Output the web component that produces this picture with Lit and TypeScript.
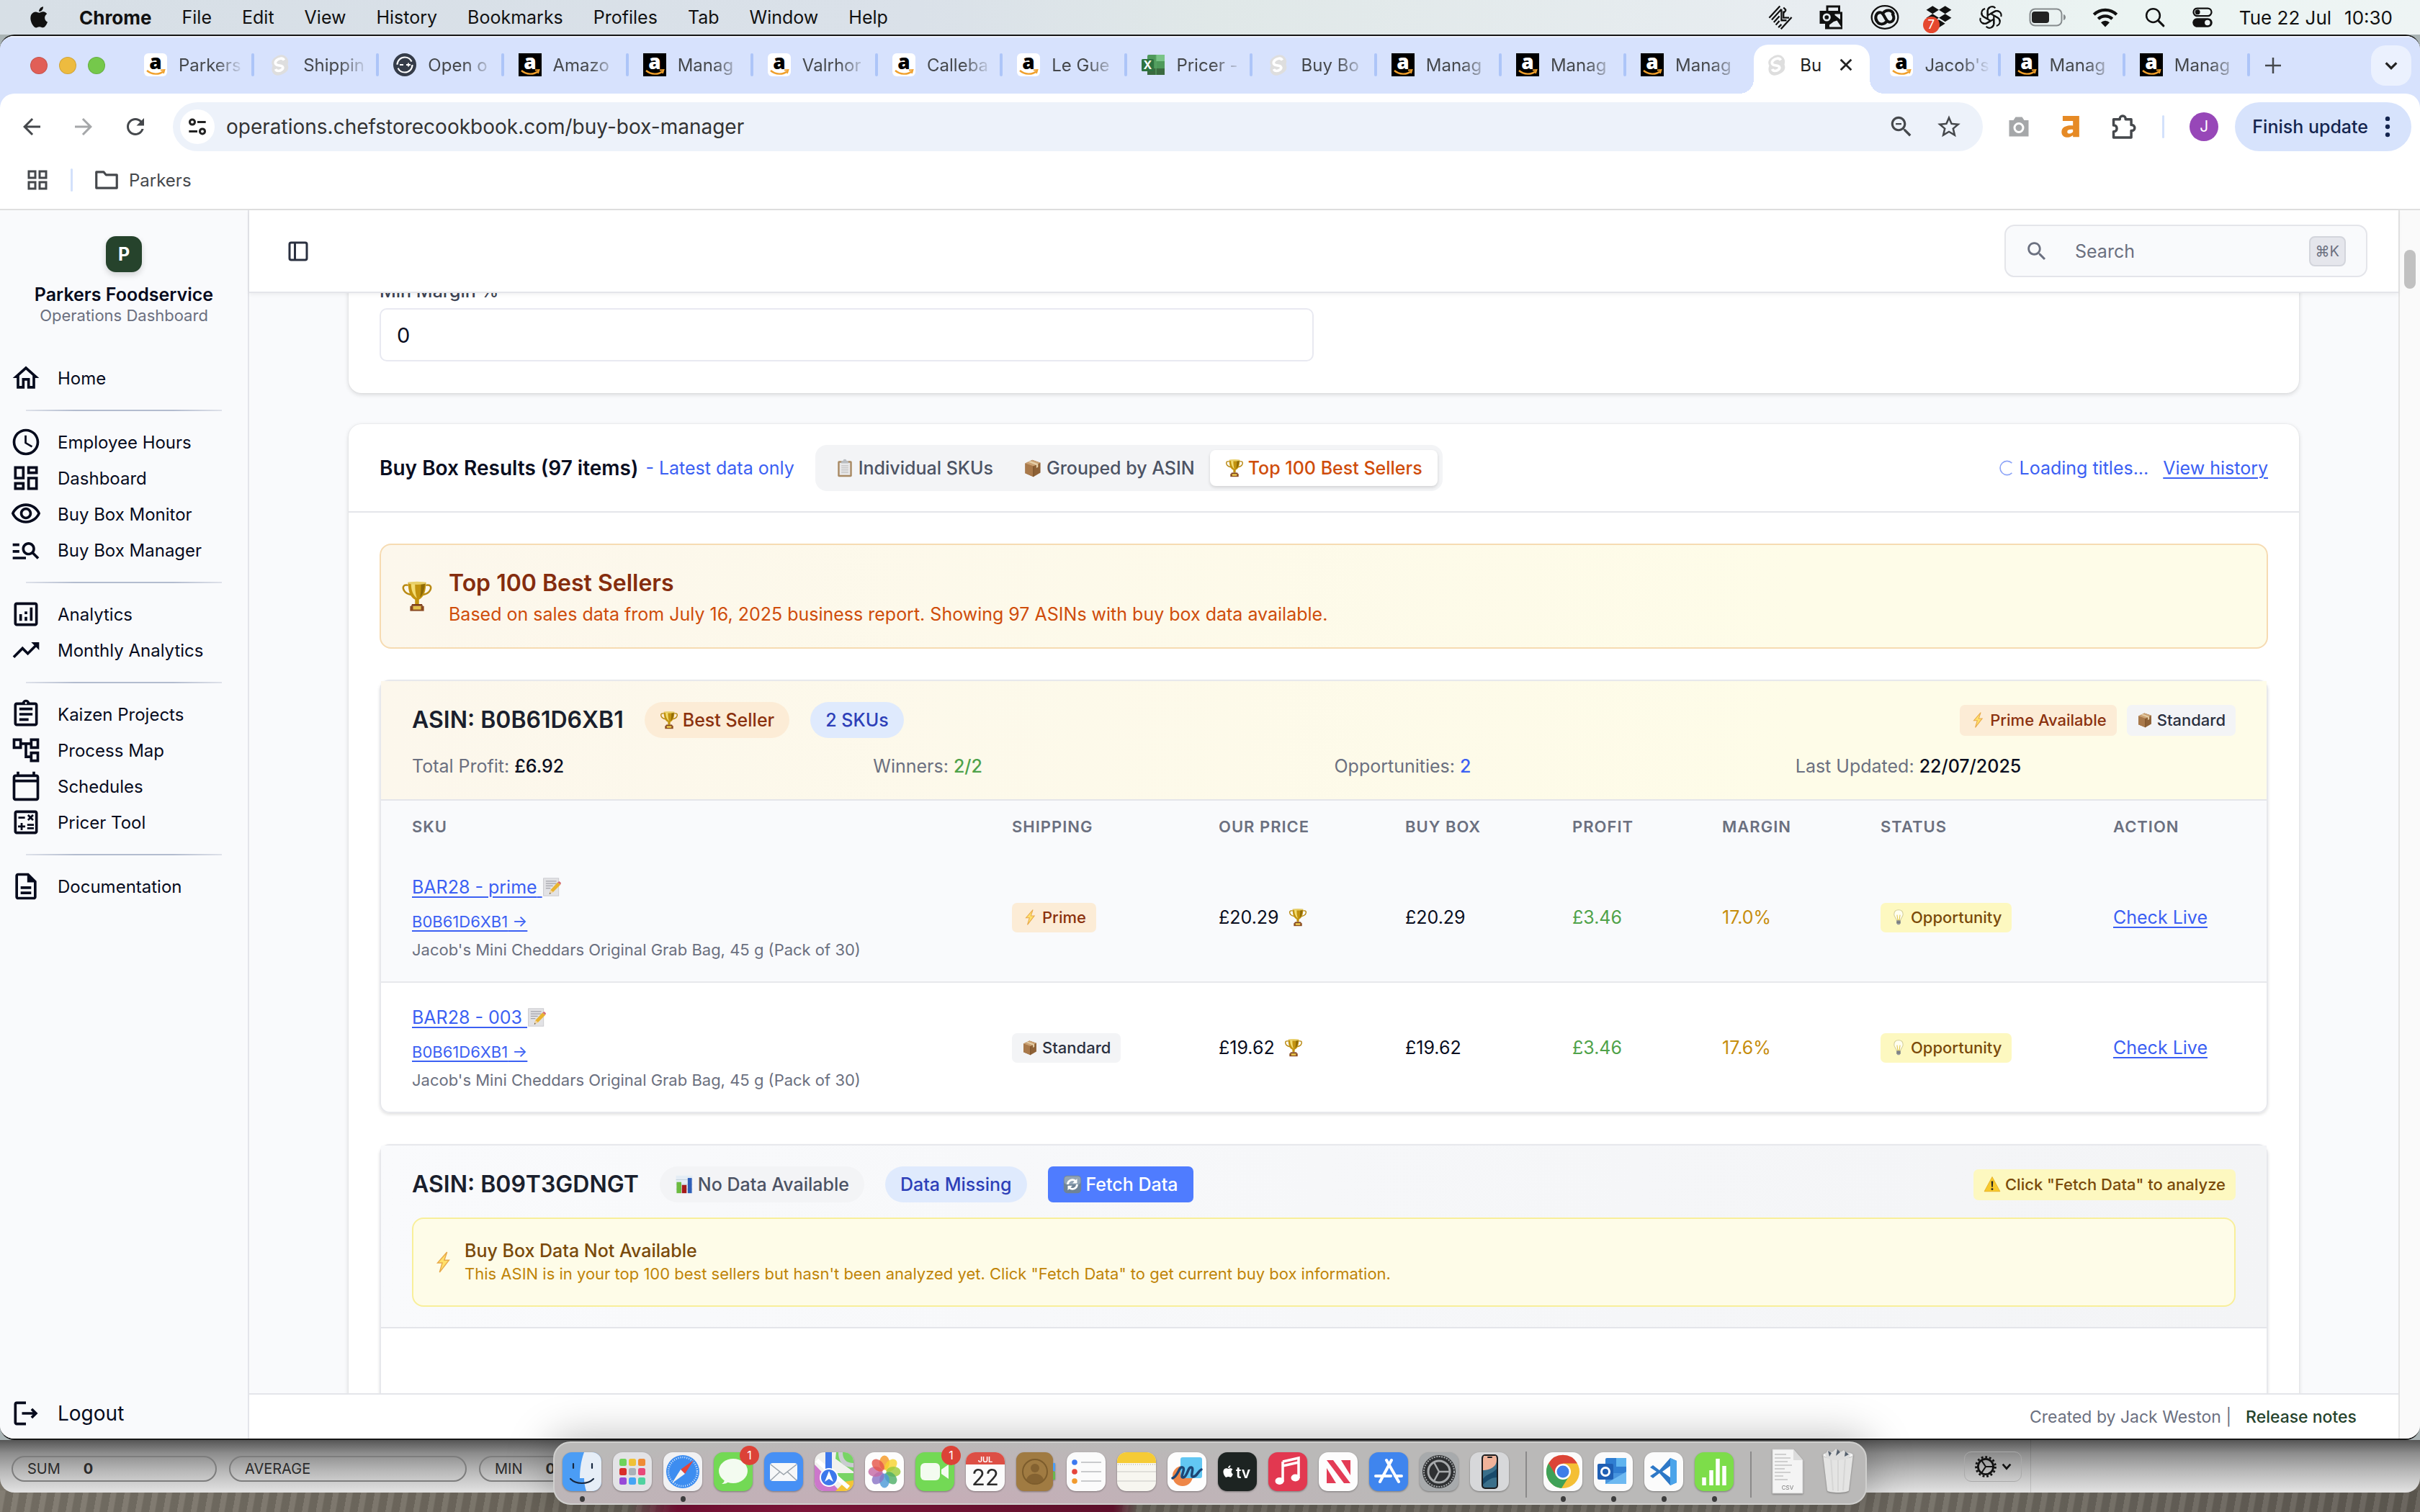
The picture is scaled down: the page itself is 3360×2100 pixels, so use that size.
import { LitElement, html, svg, css, nothing, type TemplateResult, type SVGTemplateResult } from "lit";
import { customElement, property } from "lit/decorators.js";
import { classMap } from "lit/directives/class-map.js";

/* ---------- shared glyph helpers ---------- */

const glyph = (size: number, body: SVGTemplateResult, box = 24): TemplateResult =>
  html`<svg width=${size} height=${size} viewBox="0 0 ${box} ${box}" fill="currentColor" aria-hidden="true">${body}</svg>`;

const path = (d: string) => svg`<path d=${d} />`;

const NAV_ICONS: Record<string, string> = {
  home: "M12 5.69l5 4.5V18h-2v-6H9v6H7v-7.81l5-4.5M12 3L2 12h3v8h6v-6h2v6h6v-8h3L12 3z",
  clock: "M11.99 2C6.47 2 2 6.48 2 12s4.47 10 9.99 10C17.52 22 22 17.52 22 12S17.52 2 11.99 2zM12 20c-4.42 0-8-3.58-8-8s3.58-8 8-8 8 3.58 8 8-3.58 8-8 8zm.5-13H11v6l5.25 3.15.75-1.23-4.5-2.67z",
  dashboard: "M19 5v2h-4V5h4M9 5v6H5V5h4m10 8v6h-4v-6h4M9 17v2H5v-2h4M21 3h-8v6h8V3zM11 3H3v10h8V3zm10 8h-8v10h8V11zm-10 4H3v6h8v-6z",
  eye: "M12 6c3.79 0 7.17 2.13 8.82 5.5C19.17 14.87 15.79 17 12 17s-7.17-2.13-8.82-5.5C4.83 8.13 8.21 6 12 6m0-2C7 4 2.73 7.11 1 11.5 2.73 15.89 7 19 12 19s9.27-3.11 11-7.5C21.27 7.11 17 4 12 4zm0 5c1.38 0 2.5 1.12 2.5 2.5S13.38 14 12 14s-2.5-1.12-2.5-2.5S10.62 9 12 9m0-2c-2.48 0-4.5 2.02-4.5 4.5S9.52 16 12 16s4.5-2.02 4.5-4.5S14.48 7 12 7z",
  manage: "M7 9H2V7h5v2zm0 3H2v2h5v-2zm13.59 7l-3.83-3.83c-.8.52-1.74.83-2.76.83-2.76 0-5-2.24-5-5s2.24-5 5-5 5 2.24 5 5c0 1.02-.31 1.96-.83 2.75L22 17.59 20.59 19zM17 11c0-1.65-1.35-3-3-3s-3 1.35-3 3 1.35 3 3 3 3-1.35 3-3zM2 19h10v-2H2v2z",
  analytics: "M19 3H5c-1.1 0-2 .9-2 2v14c0 1.1.9 2 2 2h14c1.1 0 2-.9 2-2V5c0-1.1-.9-2-2-2zm0 16H5V5h14v14zM7 12h2v5H7zm8-5h2v10h-2zm-4 7h2v3h-2zm0-4h2v2h-2z",
  trend: "M16 6l2.29 2.29-4.88 4.88-4-4L2 16.59 3.41 18l6-6 4 4 6.3-6.29L22 12V6h-6z",
  clipboard: "M7 15h7v2H7zm0-4h10v2H7zm0-4h10v2H7zm12-4h-4.18C14.4 1.84 13.3 1 12 1s-2.4.84-2.82 2H5c-1.1 0-2 .9-2 2v14c0 1.1.9 2 2 2h14c1.1 0 2-.9 2-2V5c0-1.1-.9-2-2-2zm-7-.25c.41 0 .75.34.75.75s-.34.75-.75.75-.75-.34-.75-.75.34-.75.75-.75zM19 19H5V5h14v14z",
  tree: "M22 11V3h-7v3H9V3H2v8h7V8h2v10h4v3h7v-8h-7v3h-2V8h2v3h7zM7 9H4V5h3v4zm10 6h3v4h-3v-4zm0-10h3v4h-3V5z",
  calendar: "M20 3h-1V1h-2v2H7V1H5v2H4c-1.1 0-2 .9-2 2v16c0 1.1.9 2 2 2h16c1.1 0 2-.9 2-2V5c0-1.1-.9-2-2-2zm0 18H4V9h16v12zm0-14H4V5h16v2z",
  calc: "M19 3H5c-1.1 0-2 .9-2 2v14c0 1.1.9 2 2 2h14c1.1 0 2-.9 2-2V5c0-1.1-.9-2-2-2zm0 16H5V5h14v14zM6.25 7.72h5v1.5h-5zM13 15.75h5v1.5h-5zm0-2.5h5v1.5h-5zM8 18h1.5v-2h2v-1.5h-2v-2H8v2H6V16h2zm6.09-7.05l1.41-1.41 1.41 1.41 1.06-1.06-1.41-1.42 1.41-1.41L16.91 6 15.5 7.41 14.09 6l-1.06 1.06 1.41 1.41-1.41 1.42z",
  doc: "M8 16h8v2H8zm0-4h8v2H8zm6-10H6c-1.1 0-2 .9-2 2v16c0 1.1.89 2 1.99 2H18c1.1 0 2-.9 2-2V8l-6-6zm4 18H6V4h7v5h5v11z",
  logout: "M17 8l-1.41 1.41L17.17 11H9v2h8.17l-1.58 1.58L17 16l4-4-4-4zM5 5h7V3H5c-1.1 0-2 .9-2 2v14c0 1.1.9 2 2 2h7v-2H5V5z",
};

const SEARCH =
  "M15.5 14h-.79l-.28-.27C15.41 12.59 16 11.11 16 9.5 16 5.91 13.09 3 9.5 3S3 5.91 3 9.5 5.91 16 9.5 16c1.61 0 3.09-.59 4.23-1.57l.27.28v.79l5 4.99L20.49 19l-4.99-5zm-6 0C7.01 14 5 11.99 5 9.5S7.01 5 9.5 5 14 7.01 14 9.5 11.99 14 9.5 14z";
const APPLE =
  "M17.05 12.54c-.03-2.6 2.13-3.86 2.22-3.92-1.21-1.77-3.09-2.01-3.76-2.04-1.6-.16-3.12.94-3.93.94-.81 0-2.06-.92-3.39-.89-1.74.03-3.35 1.01-4.25 2.57-1.81 3.14-.46 7.8 1.3 10.35.86 1.25 1.89 2.65 3.24 2.6 1.3-.05 1.79-.84 3.36-.84 1.57 0 2.01.84 3.39.81 1.4-.02 2.28-1.27 3.14-2.53.99-1.45 1.4-2.85 1.42-2.92-.03-.01-2.72-1.04-2.74-4.13zM14.47 4.9c.72-.87 1.2-2.08 1.07-3.28-1.03.04-2.28.69-3.02 1.55-.66.77-1.24 2-1.09 3.18 1.15.09 2.33-.59 3.04-1.45z";

/* ---------- picture symbols used inside labels ---------- */

type SymbolName = "trophy" | "box" | "clip" | "bolt" | "bulb" | "chart" | "sync" | "warn" | "memo";

const SYMBOLS: Record<SymbolName, SVGTemplateResult> = {
  trophy: svg`
    <path d="M7 5C2 4 1 7 3 10.500 4.500 13 7 14 10 14.500M25 5c5-1 6 2 4 5.500-1.500 2.500-4 3.500-7 4" fill="none" stroke="#b98a14" stroke-width="1.800"/>
    <path d="M7 2h18c0 9-2 15-7 17.500V24h-4v-4.500C9 17 7 11 7 2z" fill="#c2930f"/>
    <path d="M10 3h4c0 7 .5 11 2 15-4-3-6-8-6-15z" fill="#f3dc72"/><path d="M20 3h4c-.5 7-2 12-5 14 1-5 1-9 1-14z" fill="#8f6a06"/>
    <ellipse cx="16" cy="2.800" rx="9" ry="1.500" fill="#e8cf68"/>
    <path d="M11 24h10l1 2H10z" fill="#7a3b18"/><rect x="9" y="26" width="14" height="5" fill="#8a4a20"/><rect x="12" y="26" width="8" height="3.500" fill="#e3c04a"/>`,
  box: svg`
    <path d="M3 8l12-6 14 5v17l-12 7L3 25z" fill="#8e6136"/><path d="M3 8l14 5v18L3 25z" fill="#a9794a"/>
    <path d="M3 8l12-6 14 5-12 6z" fill="#cba274"/><path d="M8 5.500l14 5.500v5l3-1.500V9L12 4z" fill="#e5cfa8"/><path d="M17 13v18" stroke="#6d4722"/>`,
  clip: svg`
    <rect x="4" y="4" width="24" height="27" rx="2" fill="#a98a63"/><rect x="7" y="7" width="18" height="21" fill="#e9e9ea"/>
    <path d="M10 12h12M10 15h12M10 18h12M10 21h12M10 24h12" stroke="#bdbdbd" stroke-width="1.200"/>
    <path d="M10 4h3c0-4 6-4 6 0h3v4H10z" fill="#b9bdc2"/>`,
  bolt: svg`<path d="M22 1L8 17h7l-4 14 14-18h-7z" fill="#ffe06a" stroke="#e8a94a" stroke-width="1.500"/>`,
  bulb: svg`
    <path d="M16 1c-6 0-9 4-9 9 0 5 4 7 5 12h8c1-5 5-7 5-12 0-5-3-9-9-9z" fill="#fffef0" stroke="#d2cd98" stroke-width="1.500"/>
    <path d="M13 11l1.500 11h3L19 11" fill="none" stroke="#e0c64a" stroke-width="1.500"/><path d="M12 22h8v6l-2 3h-4l-2-3z" fill="#96999d"/><path d="M12 24.500h8M12 27h8" stroke="#5f6266"/>`,
  chart: svg`
    <rect x="2" y="1" width="28" height="30" fill="#e4edf5"/><path d="M2 8h28M2 16h28M2 24h28" stroke="#bccbd9"/>
    <rect x="3" y="12" width="8" height="19" fill="#6cbb3f"/><rect x="12" y="17" width="8" height="14" fill="#a51a1a"/><rect x="22" y="5" width="7" height="26" fill="#2f5fb8"/>`,
  sync: svg`
    <rect x="1" y="1" width="30" height="30" rx="6" fill="#6f8396"/><rect x="2" y="2" width="28" height="14" rx="5" fill="#92a4b5"/>
    <path d="M8 16a8 8 0 0 1 13-6M24 16a8 8 0 0 1-13 6" fill="none" stroke="#fff" stroke-width="3.500"/><path d="M24 6v8h-8zM8 26v-8h8z" fill="#fff"/>`,
  warn: svg`<path d="M16 2l14.500 27h-29z" fill="#f7c92c" stroke="#e3a716" stroke-linejoin="round"/><path d="M14.300 10h3.400l-.7 11h-2z" fill="#222"/><circle cx="16" cy="24.800" r="1.900" fill="#222"/>`,
  memo: svg`
    <rect x="2" y="1" width="26" height="30" fill="#e2e2e5" stroke="#c5c5c9"/><path d="M6 6h18M6 10h18M6 14h12M6 18h8" stroke="#a2a2aa" stroke-width="1.400"/>
    <path d="M12 28l2-7L26 8l5 4-12 12z" fill="#e9b32f"/><path d="M26 8l3-2 3 3-1 3z" fill="#d66a70"/><path d="M12 28l2-7 5 4z" fill="#efd4a8"/><path d="M12 28l1-2.500 1.500 1.500z" fill="#333"/>`,
};

const symbol = (name: SymbolName, size = 24) =>
  html`<svg class="sym" width=${size} height=${size} viewBox="0 0 32 32" aria-hidden="true">${SYMBOLS[name]}</svg>`;

const base = css`
  *, *::before, *::after { box-sizing: border-box; }
  a { color: inherit; }
  button, input { font: inherit; color: inherit; margin: 0; }
  button { background: none; border: 0; padding: 0; }
  svg { display: block; flex: none; }
  p, h1, h2, h3 { margin: 0; font: inherit; }
`;

/* ---------- macOS menu bar ---------- */

@customElement("system-bar")
export class SystemBar extends LitElement {
  static styles = [base, css`
    :host { display: flex; align-items: center; height: 48px; padding: 0 38px; font-size: 25px; color: #111;
      background: linear-gradient(90deg, #d7dfe6, #dae1e9 38%, #e0e8e8 50%, #e8edf1 75%, #ebf4f2 88%, #eef4f4); }
    .menus, .status { display: flex; align-items: center; }
    .menus { gap: 42px; }
    .apple { margin-right: -4px; }
    .app { font-weight: 700; font-size: 26px; }
    .status { margin-left: auto; gap: 36px; }
    .time { display: flex; gap: 18px; font-size: 26px; }
    .notify { position: relative; }
    .count { position: absolute; left: -3px; bottom: -3px; width: 23px; height: 23px; border-radius: 50%; background: #e5482f; color: #fff; font-size: 17px; line-height: 23px; text-align: center; }
  `];

  render() {
    const menus = ["File", "Edit", "View", "History", "Bookmarks", "Profiles", "Tab", "Window", "Help"];
    return html`
      <div class="menus">
        <span class="apple">${glyph(34, path(APPLE))}</span>
        <span class="app">Chrome</span>
        ${menus.map((m) => html`<span>${m}</span>`)}
      </div>
      <div class="status">
        ${glyph(34, svg`<path d="M1 12.500L11.500 1M3.500 14.500L13 4M5.500 17l5.500-6M7.500 19.500l3.500-4M10 22l3-3M12.500 23.500L23 12M15 2.500l2.500 2.500M13 4v11h5M15 6v6.500h5.500M17.500 5L15 8" fill="none" stroke="currentColor" stroke-width="1.600"/>`)}
        ${glyph(36, svg`<path d="M7 1h13v6h2v16H6v-5H1V6h6z"/><path d="M9 3h9v3H9zM15 10l5 4V9h-5zM14 16l3-1 4 6h-11v-2z" fill="#e8edf1"/><circle cx="7.500" cy="12" r="2.800" fill="none" stroke="#e8edf1" stroke-width="1.800"/>`)}
        ${glyph(40, svg`<ellipse cx="12" cy="12" rx="11" ry="9.500" fill="none" stroke="currentColor" stroke-width="1.400"/><path d="M5.500 15.500C3 12 5 8 8 8c4 0 4 8 8 8 3 0 4.500-3.500 2.500-6.500M10.500 8.500C13 5 18 6 19 9M13.500 15.500c-2.500 3-7 3-8.500-1" fill="none" stroke="currentColor" stroke-width="2.400" stroke-linecap="round"/>`)}
        <span class="notify">
          ${glyph(38, svg`<path d="M6.500 2l5.500 3.500L6.500 9 1 5.500zM17.500 2L23 5.500 17.500 9 12 5.500zM6.500 9l5.500 3.500L6.500 16 1 12.500zM17.500 9l5.500 3.500-5.500 3.500-5.500-3.500zM12 14l5.500 3.500L12 21l-5.500-3.500z"/>`)}
          <span class="count">7</span>
        </span>
        ${glyph(34, svg`<g fill="none" stroke="currentColor" stroke-width="1.500" stroke-linejoin="round">${[0, 60, 120, 180, 240, 300].map(
          (a) => svg`<path transform="rotate(${a} 12 12)" d="M9 10.200V5.500A4.300 4.300 0 0 1 16.500 3M9 10.200l6.800-4a4.300 4.300 0 0 1 4.200.2M9 10.200l3-1.700"/>`)}</g>`)}
        <svg width="52" height="26" viewBox="0 0 52 26" aria-hidden="true"><rect x="1.500" y="1.500" width="44" height="23" rx="7" fill="none" stroke="#868b8d" stroke-width="2"/><rect x="4" y="5" width="24" height="16" rx="4" fill="#222"/><path d="M48 9c4 1 4 7 0 8z" fill="#868b8d"/></svg>
        ${glyph(36, svg`<g fill="none" stroke="currentColor" stroke-width="2.800"><path d="M1.500 9.500a15 15 0 0 1 21 0M5.500 13.500a9.300 9.300 0 0 1 13 0"/></g><path d="M12 21l-4-4.200a5.600 5.600 0 0 1 8 0z"/>`)}
        ${glyph(30, svg`<circle cx="10" cy="10" r="7.500" fill="none" stroke="currentColor" stroke-width="2"/><path d="M15.500 15.500l6 6" stroke="currentColor" stroke-width="2.400" stroke-linecap="round"/>`)}
        ${glyph(30, svg`<rect x="2" y="2" width="20" height="8.500" rx="4.200" fill="none" stroke="currentColor" stroke-width="1.800"/><circle cx="6.500" cy="6.200" r="2.800"/><rect x="1" y="13" width="22" height="10" rx="5"/><circle cx="17.500" cy="18" r="3" fill="#eef4f4"/>`)}
        <span class="time"><span>Tue 22 Jul</span><span>10:30</span></span>
      </div>`;
  }
}

/* ---------- browser chrome ---------- */

type Favicon = "amazon" | "seller" | "svelte" | "chat" | "excel";
interface TabInfo { icon: Favicon; label: string; active?: boolean; }

const TABS: TabInfo[] = [
  { icon: "amazon", label: "Parkers" }, { icon: "svelte", label: "Shippin" }, { icon: "chat", label: "Open o" },
  { icon: "seller", label: "Amazo" }, { icon: "seller", label: "Manag" }, { icon: "amazon", label: "Valrhor" },
  { icon: "amazon", label: "Calleba" }, { icon: "amazon", label: "Le Gue" }, { icon: "excel", label: "Pricer -" },
  { icon: "svelte", label: "Buy Bo" }, { icon: "seller", label: "Manag" }, { icon: "seller", label: "Manag" },
  { icon: "seller", label: "Manag" }, { icon: "svelte", label: "Bu", active: true }, { icon: "amazon", label: "Jacob's" },
  { icon: "seller", label: "Manag" }, { icon: "seller", label: "Manag" },
];

const amazonMark = (bg: string, fg: string, radius: number) => svg`
  <rect width="32" height="32" rx=${radius} fill=${bg}/>
  <text x="16" y="22" text-anchor="middle" font-family="Open Sans, sans-serif" font-weight="800" font-size="28" fill=${fg}>a</text>
  <path d="M4 24c7 6 17 6 23 1" fill="none" stroke="#f0a02c" stroke-width="2.400"/><path d="M23 23.500l5.500-.5-1.500 5" fill="none" stroke="#f0a02c" stroke-width="1.800"/>`;

const FAVICONS: Record<Favicon, SVGTemplateResult> = {
  amazon: amazonMark("#fff", "#000", 6),
  seller: amazonMark("#000", "#fff", 0),
  svelte: svg`<path d="M25.500 6.500C22 1 15 1 10 5 4 8.500 3 13 5.500 17 3 23 5 29 10.500 30.500 16 32 24 27 26 24c2-3 1.500-6 .5-8.500 1-3 1-6-1-9z" fill="#dedede"/><path d="M21.500 9.500C19 5.500 14 7.500 12 9c-3.500 2.500-4 6 .5 7.500l5 1c3 1 3 3.500 1 5-3 2.500-7.500 3-9-.5" fill="none" stroke="#fff" stroke-width="3.600"/>`,
  chat: svg`<circle cx="16" cy="16" r="16" fill="#353c49"/><circle cx="16" cy="16" r="10.500" fill="none" stroke="#fff" stroke-width="2.200" stroke-dasharray="28 5"/><path d="M9 16h5M18 16h6M21 13.500v5" stroke="#fff" stroke-width="1.800"/>`,
  excel: svg`<rect x="8" y="2" width="24" height="28" rx="2" fill="#4f9a5b"/><path d="M20 2h12v9H20z" fill="#79c487"/><path d="M8 21h24v9H8z" fill="#3b6b3f"/><path d="M20 2v28" stroke="#5caa69"/><rect x="0" y="8" width="17" height="17" rx="1.500" fill="#2f7340"/><text x="8.500" y="22" text-anchor="middle" font-family="Inter, sans-serif" font-weight="700" font-size="16" fill="#fff">X</text>`,
};

@customElement("browser-chrome")
export class BrowserChrome extends LitElement {
  static styles = [base, css`
    :host { display: block; background: #d7e2fd; color: #45484c; }
    .strip { display: flex; align-items: flex-end; height: 80px; padding: 0 12px 0 42px; border-top: 2px solid #eff3fe; }
    .lights { display: flex; gap: 16px; width: 136px; height: 78px; align-items: center; flex: none; }
    .light { width: 24px; height: 24px; border-radius: 50%; background: #e15f57; border: 1px solid rgba(0, 0, 0, .12); }
    .light.min { background: #edbb3f; }
    .light.max { background: #75c84b; }
    .tabs { display: flex; flex: 1; min-width: 0; }
    .tab { position: relative; flex: 1 1 0; min-width: 0; height: 68px; display: flex; align-items: center; gap: 16px; padding: 0 4px 12px 22px; font-size: 24px; }
    .tab.rule::after { content: ""; position: absolute; right: -2px; top: 12px; width: 4px; height: 32px; border-radius: 2px; background: #adc5f8; }
    .name { flex: 1; overflow: hidden; white-space: nowrap; mask-image: linear-gradient(90deg, #000 50%, transparent 92%); }
    .tab.active { color: #222; z-index: 1; }
    .tab.active .name { mask-image: none; }
    .close { margin-right: 24px; }
    .tab.active::before { content: ""; position: absolute; z-index: -1; inset: 0 6px; border-radius: 20px 20px 0 0; background: #fff; }
    .foot { position: absolute; bottom: 0; width: 20px; height: 20px; }
    .foot.left { left: -14px; background: radial-gradient(circle at 0 0, transparent 20px, #fff 20px); }
    .foot.right { right: -14px; background: radial-gradient(circle at 100% 0, transparent 20px, #fff 20px); }
    .plus { align-self: center; margin: 0 124px 0 22px; }
    .more { align-self: center; width: 56px; height: 56px; border-radius: 20px; background: #ebf1fe; display: grid; place-items: center; color: #222; }
    .tools { display: flex; align-items: center; gap: 36px; height: 91px; padding: 0 12px 0 26px; background: #fff; border-radius: 20px 20px 0 0; }
    .faint { color: #a5a7a9; }
    .nav { display: flex; gap: 36px; }
    .address { flex: 1; display: flex; align-items: center; gap: 16px; height: 68px; border-radius: 34px; background: #edf2fa; padding: 0 28px 0 10px; margin-left: -2px; }
    .site { width: 48px; height: 48px; border-radius: 50%; background: #fff; display: grid; place-items: center; color: #222; }
    .url { flex: 1; min-width: 0; border: 0; background: none; padding: 0; font-size: 28px; color: #333; outline: 0; }
    .star { margin-left: 12px; }
    .ext { display: flex; align-items: center; gap: 35px; margin-left: -4px; }
    .rule-v { width: 3px; height: 32px; background: #d3e1fb; border-radius: 2px; }
    .avatar { width: 40px; height: 40px; border-radius: 50%; background: #9747b8; color: #fff; font-size: 21px; display: grid; place-items: center; }
    .update { display: flex; align-items: center; gap: 8px; height: 68px; border-radius: 34px; background: #d7e3fc; color: #14254f; font-size: 25px; padding: 0 14px 0 24px; margin-left: -12px; font-weight: 500; }
    .marks { display: flex; align-items: center; height: 71px; padding: 0 34px 11px; gap: 28px; background: #fff; border-bottom: 2px solid #dfdfdf; font-size: 24px; }
    .mark { display: flex; align-items: center; gap: 12px; }
  `];

  render() {
    return html`
      <div class="strip">
        <div class="lights"><span class="light"></span><span class="light min"></span><span class="light max"></span></div>
        <div class="tabs">
          ${TABS.map((t, i) => html`
            <div class=${classMap({ tab: true, active: !!t.active, rule: !t.active && !TABS[i + 1]?.active })}>
              ${t.active ? html`<span class="foot left"></span><span class="foot right"></span>` : nothing}
              ${glyph(32, FAVICONS[t.icon], 32)}
              <span class="name">${t.label}</span>
              ${t.active ? html`<button class="close" aria-label="Close tab">${glyph(22, svg`<path d="M4 4l16 16M20 4L4 20" stroke="currentColor" stroke-width="3"/>`)}</button>` : nothing}
            </div>`)}
        </div>
        <button class="plus" aria-label="New tab">${glyph(24, svg`<path d="M12 1v22M1 12h22" stroke="currentColor" stroke-width="2.500"/>`)}</button>
        <button class="more" aria-label="Search tabs">${glyph(22, svg`<path d="M4 8l8 8 8-8" fill="none" stroke="currentColor" stroke-width="3.500"/>`)}</button>
      </div>
      <div class="tools">
        <div class="nav">
          <button aria-label="Back">${glyph(36, path("M20 11H7.830l5.590-5.590L12 4l-8 8 8 8 1.410-1.410L7.830 13H20v-2z"))}</button>
          <button class="faint" aria-label="Forward">${glyph(36, path("M12 4l-1.410 1.410L16.170 11H4v2h12.170l-5.580 5.590L12 20l8-8z"))}</button>
          <button aria-label="Reload">${glyph(36, path("M17.650 6.350C16.200 4.900 14.210 4 12 4c-4.420 0-7.990 3.580-7.990 8s3.570 8 7.990 8c3.730 0 6.840-2.550 7.730-6h-2.080c-.820 2.330-3.040 4-5.650 4-3.310 0-6-2.690-6-6s2.690-6 6-6c1.660 0 3.140.690 4.220 1.780L13 11h7V4l-2.350 2.350z"))}</button>
        </div>
        <div class="address">
          <button class="site" aria-label="Site information">${glyph(28, svg`<g fill="none" stroke="currentColor" stroke-width="2.600"><circle cx="6" cy="6.500" r="3"/><path d="M12 6.500h10M2 17.500h10"/><circle cx="18" cy="17.500" r="3"/></g>`)}</button>
          <input class="url" aria-label="Address" value="operations.chefstorecookbook.com/buy-box-manager" />
          ${glyph(38, svg`<path d=${SEARCH}/><path d="M7 8.800h5v1.500H7z"/>`)}
          <span class="star">${glyph(38, path("M22 9.240l-7.190-.620L12 2 9.190 8.630 2 9.240l5.460 4.730L5.820 21 12 17.270 18.180 21l-1.630-7.030L22 9.240zM12 15.400l-3.760 2.270 1-4.280-3.320-2.880 4.380-.380L12 6.100l1.710 4.040 4.380.380-3.320 2.880 1 4.280L12 15.400z"))}</span>
        </div>
        <div class="ext">
          <span class="faint">${glyph(36, svg`<path d="M3 6h4l2-3h6l2 3h4v15H3z"/><circle cx="12" cy="13" r="4" fill="none" stroke="#fff" stroke-width="2"/>`)}</span>
          ${glyph(38, svg`<path d="M5 2.500h14.500V21H14v-1.500C9 23 4 21 4 16.500 4 12 9 10.500 14 11V7H5zM14 14.500c-3-.3-5 .2-5 2 0 2 3 2 5 0z" fill="#e68a25"/>`)}
          ${glyph(38, svg`<path d="M3.500 5.500H9c-.5-4 5.500-4 5 0h5v5c4-.5 4 5.500 0 5v6H3.500v-5.300c3.800.4 3.800-5.800 0-5.400z" fill="none" stroke="currentColor" stroke-width="2.200" stroke-linejoin="round"/>`)}
          <span class="rule-v"></span>
          <button class="avatar" aria-label="Profile">J</button>
          <button class="update">Finish update ${glyph(38, svg`<circle cx="12" cy="5" r="2"/><circle cx="12" cy="12" r="2"/><circle cx="12" cy="19" r="2"/>`)}</button>
        </div>
      </div>
      <div class="marks">
        ${glyph(36, svg`<g fill="none" stroke="currentColor" stroke-width="2"><path d="M4 4h6v6H4zM14 4h6v6h-6zM4 14h6v6H4zM14 14h6v6h-6z"/></g>`)}
        <span class="rule-v"></span>
        <span class="mark">${glyph(38, svg`<path d="M3 5h6.500l2 2.500H21V19H3z" fill="none" stroke="currentColor" stroke-width="2" stroke-linejoin="round"/>`)}Parkers</span>
      </div>`;
  }
}

/* ---------- application sidebar ---------- */

@customElement("side-nav")
export class SideNav extends LitElement {
  static styles = [base, css`
    :host { width: 346px; flex: none; display: flex; flex-direction: column; background: #f9fafc; border-right: 2px solid #e4e5ea; padding: 36px 0 10px; color: #070b1d; }
    .brand { display: flex; flex-direction: column; align-items: center; margin-bottom: 47px; }
    .logo { width: 50px; height: 50px; border-radius: 14px; background: #26432c; color: #fff; font-weight: 700; font-size: 25px; display: grid; place-items: center; margin-bottom: 16px; box-shadow: 0 4px 8px rgba(0, 0, 0, .16); }
    .name { font-size: 25px; line-height: 30px; font-weight: 600; }
    .sub { font-size: 22px; line-height: 29px; color: #6b7080; }
    .item { display: flex; align-items: center; gap: 22px; height: 50px; padding-left: 14px; font-size: 24px; text-decoration: none; }
    .rule { height: 2px; margin: 19px 36px 18px; background: linear-gradient(90deg, #dfe2ea, #b3bccf 25%, #b3bccf 75%, #dfe2ea); }
    .out { margin-top: auto; font-size: 28px; }
    .out button { display: flex; align-items: center; gap: 22px; height: 50px; padding-left: 14px; }
  `];

  static groups: [string, string][][] = [
    [["home", "Home"]],
    [["clock", "Employee Hours"], ["dashboard", "Dashboard"], ["eye", "Buy Box Monitor"], ["manage", "Buy Box Manager"]],
    [["analytics", "Analytics"], ["trend", "Monthly Analytics"]],
    [["clipboard", "Kaizen Projects"], ["tree", "Process Map"], ["calendar", "Schedules"], ["calc", "Pricer Tool"]],
    [["doc", "Documentation"]],
  ];

  render() {
    return html`
      <div class="brand">
        <span class="logo">P</span>
        <span class="name">Parkers Foodservice</span>
        <span class="sub">Operations Dashboard</span>
      </div>
      <nav>
        ${SideNav.groups.map((g, i) => html`
          ${i ? html`<div class="rule"></div>` : nothing}
          ${g.map(([icon, label]) => html`<a class="item" href="#">${glyph(44, path(NAV_ICONS[icon]))}${label}</a>`)}`)}
      </nav>
      <div class="out"><button>${glyph(44, path(NAV_ICONS.logout))}Logout</button></div>`;
  }
}

/* ---------- buy box page ---------- */

interface SkuRow { sku: string; asin: string; title: string; prime: boolean; ours: string; box: string; profit: string; margin: string; }

const ROWS: SkuRow[] = [
  { sku: "BAR28 - prime", asin: "B0B61D6XB1", title: "Jacob's Mini Cheddars Original Grab Bag, 45 g (Pack of 30)", prime: true, ours: "£20.29", box: "£20.29", profit: "£3.46", margin: "17.0%" },
  { sku: "BAR28 - 003", asin: "B0B61D6XB1", title: "Jacob's Mini Cheddars Original Grab Bag, 45 g (Pack of 30)", prime: false, ours: "£19.62", box: "£19.62", profit: "£3.46", margin: "17.6%" },
];

@customElement("buy-box-page")
export class BuyBoxPage extends LitElement {
  @property({ attribute: false }) rows: SkuRow[] = ROWS;

  static styles = [base, css`
    :host { flex: 1; min-width: 0; display: flex; flex-direction: column; font-size: 25px; line-height: 36px; color: #0a0e1f; background: #f9fafc; }
    .top { display: flex; align-items: center; justify-content: space-between; height: 115px; padding: 0 43px 0 50px; background: #fff; border-bottom: 2px solid #e4e5ea; box-shadow: 0 2px 6px rgba(0, 0, 0, .06); z-index: 1; }
    .search { display: flex; align-items: center; width: 504px; height: 73px; border: 2px solid #e4e5ea; border-radius: 14px; background: #f9fafc; padding: 0 28px 0 26px; color: #6b7080; }
    .search input { flex: 1; min-width: 0; margin-left: 36px; border: 0; background: none; padding: 0; outline: 0; }
    .search input::placeholder { color: #6b7080; opacity: 1; }
    .search label { display: flex; }
    kbd { font: inherit; font-size: 20px; line-height: 38px; padding: 0 7px; border: 2px solid #d3d5dc; border-radius: 8px; background: #e5e6ec; }
    .scroll { flex: 1; min-height: 0; overflow: hidden; padding: 0 138px; }
    .card { background: #fff; border-radius: 18px; box-shadow: 0 2px 6px rgba(0, 0, 0, .14), 0 0 2px rgba(0, 0, 0, .08); }
    .filters { margin-top: -43px; padding: 22px 43px 44px; display: grid; grid-template-columns: 1fr 1fr; gap: 29px; margin-bottom: 43px; }
    .field { display: flex; flex-direction: column; gap: 6px; color: #3e4453; font-weight: 500; }
    .field input { height: 74px; border: 2px solid #e8e9f1; border-radius: 10px; padding: 0 22px; font-size: 29px; font-weight: 400; color: #0a0e1f; background: #fff; }
    .bar { display: flex; align-items: center; padding: 29px 43px 28px; border-bottom: 2px solid #e4e5ea; }
    .title { font-size: 28px; font-weight: 600; }
    .note { margin-left: 10px; color: #3b60f3; }
    .segments { display: flex; margin-left: 29px; padding: 7px; border-radius: 16px; background: #f3f4f6; }
    .segments button { display: flex; align-items: center; gap: 6px; height: 50px; padding: 0 21px; border-radius: 8px; font-weight: 500; color: #4c5364; }
    .segments .on { background: #fff; color: #cf4d0b; box-shadow: 0 2px 4px rgba(0, 0, 0, .14); }
    .links { margin-left: auto; display: flex; align-items: center; gap: 6px; color: #3b60f3; }
    .links a { margin-left: 14px; text-underline-offset: 4px; text-decoration-thickness: 2px; }
    .body { padding: 43px; display: flex; flex-direction: column; gap: 43px; }
    .banner { display: flex; align-items: center; gap: 22px; padding: 28px; border: 2px solid #f6dbb2; border-radius: 16px; background: linear-gradient(90deg, #fcf7ec, #fefce8 75%); color: #cf4d0b; }
    .banner h2 { font-size: 32px; line-height: 50px; font-weight: 600; color: #852d0e; }
    .asin { border: 2px solid #e7e8ec; border-radius: 14px; box-shadow: 0 2px 4px rgba(0, 0, 0, .12); }
    .head { padding: 29px 43px 28px; border-bottom: 2px solid #e4e5ea; background: linear-gradient(90deg, #fcf7ec, #fefce8 75%); display: flex; flex-direction: column; gap: 21px; }
    .head.plain { background: linear-gradient(90deg, #f9fafc, #f3f4f6); }
    .line { display: flex; align-items: center; gap: 29px; height: 50px; }
    .line h3 { font-size: 32px; font-weight: 600; color: #1a1f2d; }
    .pill, .tag, .fetch { display: inline-flex; align-items: center; gap: 6px; font-weight: 500; white-space: nowrap; }
    .pill { height: 50px; padding: 0 21px; border-radius: 25px; }
    .tag { height: 43px; padding: 0 14px; border-radius: 7px; font-size: 22px; }
    .orange { background: #fcecd6; color: #8b310e; }
    .blue { background: #dfeafd; color: #2d3fb8; }
    .grey { background: #f3f4f6; color: #2a3040; }
    .pill.grey { color: #4c5364; background: #f3f4f6; }
    .yellow { background: #fdf8c0; color: #7a4a0a; }
    .fetch { height: 50px; padding: 0 21px; border-radius: 7px; background: #4f7cff; color: #fff; }
    .tags { margin-left: auto; display: flex; gap: 14px; }
    .stats { display: grid; grid-template-columns: repeat(4, 1fr); gap: 29px; color: #6b7080; }
    .stats b { font-weight: 500; color: #0a0e1f; }
    .stats .good, .good { color: #4fa24a; }
    .stats .info { color: #3b60f3; }
    .amber { color: #c68d0d; }
    table { width: 100%; table-layout: fixed; border-collapse: collapse; }
    th { height: 72px; padding: 0 0 0 43px; text-align: left; font-size: 22px; font-weight: 600; letter-spacing: 1px; color: #6b7080; background: #f9fafc; }
    td { padding: 29px 0 28px 43px; height: 180px; vertical-align: middle; }
    .focus td { background: #f9fafc; border-bottom: 2px solid #e7e8ec; }
    td .tag { height: 41px; }
    td a { color: #3b60f3; text-underline-offset: 4px; text-decoration-thickness: 2px; }
    .sku { display: flex; flex-direction: column; align-items: flex-start; }
    .sku .small { font-size: 22px; line-height: 32px; margin: 14px 0 9px; }
    .sku p { font-size: 22px; line-height: 29px; color: #6b7080; }
    td .sym { display: inline-block; vertical-align: -4px; }
    .price .sym { margin-left: 6px; }
    .w-sku { width: 833px; } .w-ship { width: 287px; } .w-our { width: 259px; } .w-box { width: 232px; }
    .w-profit { width: 208px; } .w-margin { width: 220px; } .w-status { width: 323px; }
    .notice { display: flex; align-items: center; gap: 15px; padding: 28px 26px; border: 2px solid #f8ef9a; border-radius: 16px; background: #fefce8; font-size: 22px; line-height: 32px; color: #c08407; }
    .notice h4 { margin: 0; font-size: 25px; font-weight: 500; color: #7a4a0a; }
    .empty { height: 180px; background: #fff; }
    .foot { display: flex; align-items: center; justify-content: flex-end; gap: 20px; height: 63px; padding: 0 58px 0 0; border-top: 2px solid #e4e5ea; background: #fff; font-size: 23px; color: #6b7080; z-index: 1; }
    .foot a { font-weight: 500; color: #26432c; text-decoration: none; }
  `];

  private row(r: SkuRow) {
    return html`
      <tr class=${classMap({ focus: r.prime })}>
        <td><div class="sku">
          <a href="#">${r.sku} ${symbol("memo", 26)}</a>
          <a class="small" href="#">${r.asin} →</a>
          <p>${r.title}</p>
        </div></td>
        <td>${r.prime ? html`<span class="tag orange">${symbol("bolt", 22)}Prime</span>` : html`<span class="tag grey">${symbol("box", 22)}Standard</span>`}</td>
        <td class="price">${r.ours} ${symbol("trophy", 26)}</td>
        <td>${r.box}</td>
        <td class="good">${r.profit}</td>
        <td class="amber">${r.margin}</td>
        <td><span class="tag yellow">${symbol("bulb", 22)}Opportunity</span></td>
        <td><a href="#">Check Live</a></td>
      </tr>`;
  }

  render() {
    const cols: [string, string][] = [["w-sku", "SKU"], ["w-ship", "SHIPPING"], ["w-our", "OUR PRICE"], ["w-box", "BUY BOX"], ["w-profit", "PROFIT"], ["w-margin", "MARGIN"], ["w-status", "STATUS"], ["", "ACTION"]];
    return html`
      <header class="top">
        <button aria-label="Toggle sidebar">${glyph(36, svg`<g fill="none" stroke="#2a3040" stroke-width="2"><rect x="4" y="4" width="16" height="16" rx="1.500"/><path d="M9 4v16"/></g>`)}</button>
        <div class="search">
          <label for="q">${glyph(34, path(SEARCH))}</label>
          <input id="q" type="search" placeholder="Search" aria-label="Search" />
          <kbd>⌘K</kbd>
        </div>
      </header>
      <div class="scroll">
        <section class="card filters">
          <div class="field"><label for="margin">Min Margin %</label><input id="margin" value="0" /></div>
        </section>
        <section class="card">
          <div class="bar">
            <h2 class="title">Buy Box Results (97 items)</h2><span class="note">- Latest data only</span>
            <div class="segments">
              <button>${symbol("clip", 26)}Individual SKUs</button>
              <button>${symbol("box", 26)}Grouped by ASIN</button>
              <button class="on">${symbol("trophy", 26)}Top 100 Best Sellers</button>
            </div>
            <div class="links">
              ${glyph(22, svg`<path d="M19 4.500A10.500 10.500 0 1 0 19 19.500" fill="none" stroke="#8ea5f7" stroke-width="1.800"/>`)}
              Loading titles... <a href="#">View history</a>
            </div>
          </div>
          <div class="body">
            <div class="banner">${symbol("trophy", 44)}<div><h2>Top 100 Best Sellers</h2><p>Based on sales data from July 16, 2025 business report. Showing 97 ASINs with buy box data available.</p></div></div>
            <article class="asin">
              <div class="head">
                <div class="line">
                  <h3>ASIN: B0B61D6XB1</h3>
                  <span class="pill orange">${symbol("trophy", 26)}Best Seller</span>
                  <span class="pill blue">2 SKUs</span>
                  <span class="tags"><span class="tag orange">${symbol("bolt", 22)}Prime Available</span><span class="tag grey">${symbol("box", 22)}Standard</span></span>
                </div>
                <div class="stats">
                  <span>Total Profit: <b>£6.92</b></span><span>Winners: <b class="good">2/2</b></span>
                  <span>Opportunities: <b class="info">2</b></span><span>Last Updated: <b>22/07/2025</b></span>
                </div>
              </div>
              <table>
                <thead><tr>${cols.map(([c, t]) => html`<th class=${c}>${t}</th>`)}</tr></thead>
                <tbody>${this.rows.map((r) => this.row(r))}</tbody>
              </table>
            </article>
            <article class="asin">
              <div class="head plain">
                <div class="line">
                  <h3>ASIN: B09T3GDNGT</h3>
                  <span class="pill grey">${symbol("chart", 26)}No Data Available</span>
                  <span class="pill blue">Data Missing</span>
                  <button class="fetch">${symbol("sync", 26)}Fetch Data</button>
                  <span class="tags"><span class="tag yellow">${symbol("warn", 24)}Click "Fetch Data" to analyze</span></span>
                </div>
                <div class="notice">${symbol("bolt", 30)}<div><h4>Buy Box Data Not Available</h4><p>This ASIN is in your top 100 best sellers but hasn't been analyzed yet. Click "Fetch Data" to get current buy box information.</p></div></div>
              </div>
              <div class="empty"></div>
            </article>
          </div>
        </section>
      </div>
      <footer class="foot"><span>Created by Jack Weston |</span><a href="#">Release notes</a></footer>`;
  }
}

/* ---------- dock ---------- */

interface DockItem { name: string; art: SVGTemplateResult; running?: boolean; badge?: string; }
const tile = (fill: string) => svg`<rect x="1" y="1" width="54" height="54" rx="13" fill=${fill}/>`;
const dots = (colors: string[]) => colors.map((c, i) => svg`<rect x=${10 + (i % 3) * 13} y=${10 + Math.floor(i / 3) * 13} width="10" height="10" rx="2.500" fill=${c}/>`);

const DOCK: (DockItem | null)[] = [
  { name: "Finder", running: true, art: svg`${tile("#4b9df5")}<path d="M31 1h11a13 13 0 0 1 13 13v28a13 13 0 0 1-13 13H34c-2-6-3-12-3-18h-6C25 24 27 12 31 1z" fill="#e6eef7"/><path d="M16 17v6M42 17v6M12 38c8 8 24 8 32 0" fill="none" stroke="#18283f" stroke-width="2.200" stroke-linecap="round"/>` },
  { name: "Launchpad", art: svg`${tile("#e3e3e6")}${dots(["#6fd35a", "#f0c137", "#ef8b35", "#d92e2a", "#a9b1b8", "#e8487a", "#9849d8", "#45a5f5", "#50d2a0"])}` },
  { name: "Safari", running: true, art: svg`${tile("#f1f1f3")}<circle cx="28" cy="28" r="23" fill="#3d8df0"/><circle cx="28" cy="28" r="20" fill="none" stroke="#d4e6fb" stroke-width="2.500" stroke-dasharray="1 2"/><path d="M43 12L31 31l-6-6z" fill="#e5443a"/><path d="M13 44l12-19 6 6z" fill="#f4f4f4"/>` },
  { name: "Messages", badge: "1", art: svg`${tile("#73d955")}<ellipse cx="28" cy="27" rx="20" ry="17" fill="#f3fbf0"/><path d="M16 38c0 4-2 6-4 7 5 0 8-1 10-4z" fill="#f3fbf0"/>` },
  { name: "Mail", art: svg`${tile("#4690f5")}<rect x="9" y="16" width="38" height="25" rx="4" fill="#f6f7f8"/><path d="M10 18l18 14 18-14M10 40l13-12M46 40L33 28" fill="none" stroke="#9ba3ab" stroke-width="1.500"/>` },
  { name: "Maps", art: svg`${tile("#f1f1ee")}<path d="M31 1h11a13 13 0 0 1 13 13v14L30 10z" fill="#78d465"/><path d="M1 18L36 55H14A13 13 0 0 1 1 42z" fill="#cc77cb"/><path d="M30 55l22-22 3 3v6a13 13 0 0 1-13 13z" fill="#f3c436"/><path d="M30 30h25v10L42 42z" fill="#78d465"/><path d="M4 12l44 38" stroke="#fff" stroke-width="6"/><path d="M16 1h9v26h-9z" fill="#3d78ec"/><path d="M37 1c0 12 6 18 18 18" fill="none" stroke="#c9cccf" stroke-width="6"/><circle cx="21" cy="36" r="12" fill="#3d78ec" stroke="#fff" stroke-width="2"/><path d="M21 27l6 15-6-4-6 4z" fill="#fff"/>` },
  { name: "Photos", art: svg`${tile("#fdfdfd")}${["#f59a27", "#f6d32f", "#9ccb3b", "#4fae69", "#4d9ad8", "#8a74c6", "#c66aa5", "#e5574a"].map((c, i) => svg`<ellipse transform="rotate(${i * 45} 28 28)" cx="28" cy="15.500" rx="7" ry="10" fill=${c} opacity=".82"/>`)}` },
  { name: "FaceTime", badge: "1", art: svg`${tile("#73d955")}<rect x="8" y="16" width="27" height="24" rx="6" fill="#f3fbf0"/><path d="M37 25l10-7v20l-10-7z" fill="#f3fbf0"/>` },
  { name: "Calendar", art: svg`${tile("#fbfbfb")}<path d="M1 18v-4A13 13 0 0 1 14 1h28a13 13 0 0 1 13 13v4z" fill="#dd4f45"/><text x="28" y="15" text-anchor="middle" font-family="Inter, sans-serif" font-weight="600" font-size="11" fill="#fff">JUL</text><text x="28" y="47" text-anchor="middle" font-family="Inter, sans-serif" font-size="31" fill="#2b2b2b">22</text>` },
  { name: "Contacts", art: svg`<rect x="48" y="16" width="7" height="11" fill="#4b9df5"/><rect x="48" y="28" width="7" height="11" fill="#69b84f"/><rect x="1" y="1" width="51" height="54" rx="11" fill="#a07b42"/><circle cx="27" cy="28" r="17" fill="none" stroke="#7c5c2c" stroke-width="2"/><circle cx="27" cy="23" r="6" fill="#846231"/><path d="M15 39c3-11 21-11 24 0-6 7-18 7-24 0z" fill="#846231"/>` },
  { name: "Reminders", art: svg`${tile("#fbfbfb")}${["#3b78f0", "#e5443a", "#f19a2e"].map((c, i) => svg`<circle cx="12" cy=${15 + i * 13} r="3.800" fill=${c}/><path d="M21 ${15 + i * 13}h28" stroke="#c5c6c8" stroke-width="1.800"/>`)}` },
  { name: "Notes", art: svg`${tile("#f7f6f0")}<path d="M1 16v-2A13 13 0 0 1 14 1h28a13 13 0 0 1 13 13v2z" fill="#f5cb35"/><path d="M1 28h54M1 41h54" stroke="#d9d8d2" stroke-width="1.500"/><path d="M2 18h52" stroke="#a8a69e" stroke-dasharray="1 2"/>` },
  { name: "Freeform", art: svg`${tile("#fdfdfd")}<circle cx="22" cy="34" r="14" fill="#ee8648"/><rect x="19" y="8" width="30" height="29" rx="3" fill="#62c7f3"/><path d="M8 37c8-3 9-17 14-15s-5 15 1 14 6-15 11-14-3 14 3 13 6-8 11-10" fill="none" stroke="#1c4676" stroke-width="3.500" stroke-linecap="round"/>` },
  { name: "TV", art: svg`${tile("#1d2422")}<g transform="translate(6 18) scale(.8)" fill="#fff">${path(APPLE)}</g><text x="36" y="37" text-anchor="middle" font-family="Inter, sans-serif" font-weight="600" font-size="21" fill="#fff">tv</text>` },
  { name: "Music", art: svg`${tile("#e23850")}<path d="M21 14l22-5v28" fill="none" stroke="#fff" stroke-width="3.500"/><path d="M21 14v28M21 20l22-5" stroke="#fff" stroke-width="3.500"/><ellipse cx="16.500" cy="41" rx="6" ry="5" fill="#fff"/><ellipse cx="38.500" cy="36.500" rx="6" ry="5" fill="#fff"/>` },
  { name: "News", art: svg`${tile("#fdfdfd")}<path d="M12 12h9l24 32h-9zM12 23v21h13zM45 33V12H32z" fill="#e33b55"/>` },
  { name: "App Store", art: svg`${tile("#3f85ee")}<path d="M32 12L16 42M25 12l17 30M10 34h21M37 34h9" stroke="#fff" stroke-width="4" stroke-linecap="round"/>` },
  { name: "Settings", art: svg`${tile("#a7aaac")}<circle cx="28" cy="28" r="23" fill="#2e3032"/><circle cx="28" cy="28" r="21" fill="none" stroke="#a7aaac" stroke-width="2" stroke-dasharray="2 1.500"/><circle cx="28" cy="28" r="15" fill="none" stroke="#a7aaac" stroke-width="3"/><path d="M28 28L21 15M28 28h15M28 28l-7 13" stroke="#a7aaac" stroke-width="2.500"/>` },
  { name: "iPhone Mirroring", art: svg`${tile("#d7d8da")}<rect x="17" y="4" width="23" height="48" rx="5" fill="#1b1c1e"/><rect x="19" y="6" width="19" height="44" rx="3.500" fill="#3a6f8a"/><path d="M19 26c8 0 19-4 19-14v-2l-1-4H20l-1 4z" fill="#f0b39a"/><path d="M19 38c6-8 12-6 19-14v12c-6 0-12 3-19 10z" fill="#184a6b"/><rect x="25" y="7" width="7" height="2" rx="1" fill="#1b1c1e"/>` },
  null,
  { name: "Chrome", running: true, art: svg`${tile("#fbfbfb")}<circle cx="28" cy="28" r="23" fill="#f4bf35"/><path d="M8 16.500a23 23 0 0 1 40 0H28L18 34z" fill="#dc4437"/><path d="M8 16.500a23 23 0 0 0 18 34.400L37 33.500H18.500z" fill="#3fa157"/><circle cx="28" cy="28" r="11" fill="#fff"/><circle cx="28" cy="28" r="8.500" fill="#3f7de8"/>` },
  { name: "Outlook", running: true, art: svg`${tile("#fbfbfb")}<rect x="17" y="9" width="29" height="36" rx="2" fill="#2f7ed2"/><path d="M32 9h14v12H32z" fill="#5fb4ef"/><path d="M17 30h29v15H17z" fill="#4795de"/><path d="M17 45l29-17v17z" fill="#6db9f1"/><rect x="6" y="17" width="22" height="22" rx="2" fill="#1f5fb4"/><circle cx="17" cy="28" r="5.500" fill="none" stroke="#fff" stroke-width="3"/>` },
  { name: "Code", running: true, art: svg`${tile("#fbfbfb")}<path d="M37 9l9 4v30l-9 4-15-17-9 7-4-3 9-6-9-6 4-3 9 7z" fill="#2d78c7"/><path d="M37 9l9 4v30l-9 4z" fill="#4ba4ea"/><path d="M37 20v16L26 28z" fill="#fff"/>` },
  { name: "Numbers", running: true, art: svg`${tile("#7ddd4a")}<path d="M14 47V36M24 47V26M33 47V10M42 47V20" stroke="#fff" stroke-width="5.500"/>` },
  null,
  { name: "Document", art: svg`<path d="M7-3h29l13 15v46H7z" fill="#f4f4f4" stroke="#d0d0d0"/><path d="M36-3v15h13z" fill="#dcdcdc"/><path d="M10 4h16M10 9h22M10 14h18M10 19h24M10 24h14M10 29h22M10 34h12M10 39h18" stroke="#cfcfcf" stroke-width="2"/><text x="28" y="53" text-anchor="middle" font-family="Inter, sans-serif" font-size="8" fill="#777">CSV</text>` },
  { name: "Trash", art: svg`<path d="M7 4l6 50c1 4 29 4 30 0l6-50z" fill="#e4e4e3"/><path d="M18 8l3 46M28 9v46M38 8l-3 46" stroke="#d6d6d5" stroke-width="2"/><ellipse cx="28" cy="5" rx="21" ry="5" fill="#f6f6f6" stroke="#bcbcbc"/><path d="M10 4l4-6 5 4 6-6 5 6 6-4 3 5 7-1-3 7c-10 4-24 4-31 0z" fill="#ddd"/><path d="M14-1l5 3-3 5zM27-3l4 4-6 5zM38 0l5 4-6 3z" fill="#55606e"/>` },
];

@customElement("app-dock")
export class AppDock extends LitElement {
  static styles = [base, css`
    :host { display: flex; align-items: flex-start; gap: 14px; height: 88px; padding: 12px 10px 0; border-radius: 24px; border: 2px solid #cfcfcd;
      background: radial-gradient(ellipse 700px 90px at 28% 100%, #c6adb7, rgba(190, 186, 186, 0)), #bab9b8;
      box-shadow: 0 0 60px 6px rgba(0, 0, 0, .26); }
    .app { position: relative; width: 56px; }
    svg { overflow: visible; filter: drop-shadow(0 1px 1px rgba(0, 0, 0, .35)); }
    .dot { position: absolute; left: 25px; top: 62px; width: 7px; height: 8px; border-radius: 50%; background: #3c3c3c; }
    .badge { position: absolute; right: -8px; top: -8px; width: 27px; height: 27px; border-radius: 50%; background: #dc4237; color: #fff; font-size: 16px; line-height: 27px; text-align: center; }
    .rule { width: 2px; height: 64px; margin: 0 8px; background: #8b8a8a; }
  `];

  render() {
    return DOCK.map((d) => d === null
      ? html`<span class="rule"></span>`
      : html`<span class="app" role="img" aria-label=${d.name}>
          <svg width="56" height="56" viewBox="0 0 56 56">${d.art}</svg>
          ${d.badge ? html`<span class="badge">${d.badge}</span>` : nothing}
          ${d.running ? html`<span class="dot"></span>` : nothing}
        </span>`);
  }
}

/* ---------- desktop ---------- */

@customElement("app-root")
export class AppRoot extends LitElement {
  static styles = [base, css`
    :host { position: relative; display: flex; flex-direction: column; height: 100vh; overflow: hidden; font-family: Inter, "Open Sans", "DejaVu Sans", sans-serif;
      background:
        linear-gradient(90deg, transparent 26%, #7d1138 28%, #8d1740 33%, #6b1231 46%, transparent 47%) bottom / 100% 30px no-repeat,
        repeating-linear-gradient(100deg, rgba(255, 255, 255, .06) 0 7px, rgba(0, 0, 0, .09) 9px 19px) bottom / 100% 30px no-repeat,
        linear-gradient(90deg, #7c766b, #6e685d 30%, #79746a 70%, #625d55) bottom / 100% 100px no-repeat, #a9b3b4; }
    .window { flex: 1; min-height: 0; display: flex; flex-direction: column; overflow: hidden; border: solid #161616; border-width: 2px 0; border-radius: 20px; background: #fff; }
    .page { flex: 1; min-height: 0; display: flex; }
    .track { width: 30px; flex: none; border-left: 2px solid #e4e4e4; background: #fafafa; padding: 55px 6px 0; }
    .thumb { height: 54px; border-radius: 8px; background: #c1c1c1; }
    .sheet { display: flex; align-items: center; height: 73px; margin-bottom: 27px; font-size: 20px; color: #2b2b2b; border-radius: 0 0 20px 20px; overflow: hidden;
      background: linear-gradient(180deg, #555, #8c8c8c 25%, #b9b9b9 60%, #e3e3e3); }
    .sums { flex: 1; display: flex; align-items: center; gap: 17px; padding: 6px 16px 0; }
    .sum { display: flex; align-items: center; gap: 32px; width: 285px; height: 36px; padding: 0 20px; border: 2px solid #7d7d7d; border-radius: 18px; }
    .sum.wide { width: 330px; }
    .side { width: 541px; align-self: stretch; border-left: 1px solid rgba(0, 0, 0, .12); }
    .gear { display: flex; align-items: center; gap: 4px; height: 42px; padding: 0 12px; margin-right: 12px; border: 1px solid #a9a9a9; border-radius: 10px; color: #111; }
    app-dock { position: absolute; bottom: 10px; left: 50%; transform: translateX(-50%); z-index: 2; }
  `];

  render() {
    return html`
      <system-bar></system-bar>
      <div class="window">
        <browser-chrome></browser-chrome>
        <div class="page">
          <side-nav></side-nav>
          <buy-box-page></buy-box-page>
          <div class="track"><div class="thumb"></div></div>
        </div>
      </div>
      <div class="sheet">
        <div class="sums">
          <span class="sum">SUM <b>0</b></span><span class="sum wide">AVERAGE</span><span class="sum">MIN <b>0</b></span>
        </div>
        <button class="gear" aria-label="Table options">
          ${glyph(34, svg`<g fill="none" stroke="currentColor"><circle cx="12" cy="12" r="7.500" stroke-width="2"/><circle cx="12" cy="12" r="9.500" stroke-width="2" stroke-dasharray="2 2"/><path d="M12 12L8 6M12 12h7M12 12l-4 6" stroke-width="1.500"/></g>`)}
          ${glyph(16, svg`<path d="M4 7l8 9 8-9" fill="none" stroke="currentColor" stroke-width="4"/>`)}
        </button>
        <div class="side"></div>
      </div>
      <app-dock></app-dock>`;
  }
}
